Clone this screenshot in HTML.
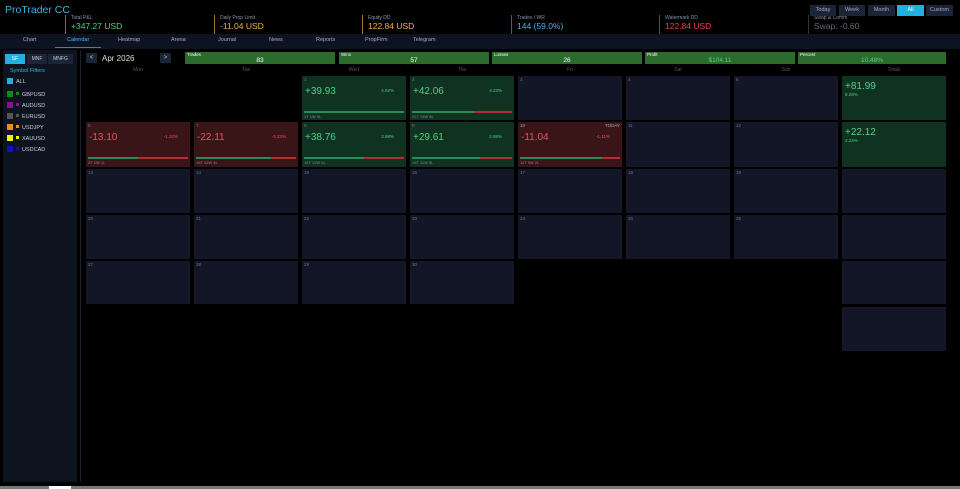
<!DOCTYPE html><html><head><meta charset="utf-8"><style>
*{margin:0;padding:0;box-sizing:border-box}
body{width:960px;height:489px;background:#000;font-family:"Liberation Sans",sans-serif;position:relative;overflow:hidden;color:#ccc}
.a{position:absolute}
.stat{position:absolute;top:15px;height:19px;border-left:1px solid;padding-left:5px}
.stat .l{font-size:5px;color:#8a93a8;line-height:6px}
.stat .v{font-size:8.5px;line-height:11px}
.btn{position:absolute;top:5px;height:11px;background:#1c2438;font-size:5.5px;color:#aab;text-align:center;line-height:11px}
.tab{position:absolute;top:37px;font-size:5.5px;color:#aab}
.cell{position:absolute;width:104px;background:#121626}
.cell .d{position:absolute;left:2px;top:1px;font-size:4.5px;color:#778}
.g{background:#0f3320}.r{background:#3a1518}
.big{position:absolute;left:3px;top:10px;font-size:10px}
.pct{position:absolute;right:12px;top:12px;font-size:4.5px}
.bar{position:absolute;left:2px;right:2px;top:35px;height:1.5px}
.ft{position:absolute;left:2px;top:38px;font-size:4px;color:#889}
.sum{position:absolute;top:52px;height:12px;width:150px;background:#2d6b2d}
.sum .t{position:absolute;left:2px;top:0;font-size:4.5px;color:#fff}
.sum .n{position:absolute;left:0;right:0;top:5px;text-align:center;font-size:6.5px;color:#fff}
.dh{position:absolute;top:67px;width:104px;text-align:center;font-size:5px;color:#555}
.sym{position:absolute;left:7px;font-size:5.5px;color:#ccd}
.sym i{display:inline-block;width:6px;height:6px;margin-right:3px;vertical-align:-1px}
.sym b{display:inline-block;width:3px;height:3px;margin-right:3px;vertical-align:1px}
</style></head><body>
<div class="a" style="left:5px;top:4px;font-size:10.5px;color:#3ab4e0">ProTrader CC</div>
<div class="stat" style="left:65px;border-color:#2c8a5c"><div class="l">Total P&amp;L</div><div class="v" style="color:#4fd18a">+347.27 USD</div></div>
<div class="stat" style="left:214px;border-color:#a07a3a"><div class="l">Daily Prop Limit</div><div class="v" style="color:#f0b24a">-11.04 USD</div></div>
<div class="stat" style="left:362px;border-color:#a07a3a"><div class="l">Equity DD</div><div class="v" style="color:#f0b24a">122.84 USD</div></div>
<div class="stat" style="left:511px;border-color:#2a6a8a"><div class="l">Trades / WR</div><div class="v" style="color:#4ab0e0">144 (59.0%)</div></div>
<div class="stat" style="left:659px;border-color:#9a2a30"><div class="l">Watermark DD</div><div class="v" style="color:#e84050">122.84 USD</div></div>
<div class="stat" style="left:808px;border-color:#333;width:145px"><div class="l">Swap &amp; Comm</div><div class="v" style="color:#667">Swap: -0.60</div></div>
<div class="btn" style="left:810px;width:26px">Today</div>
<div class="btn" style="left:839px;width:26px">Week</div>
<div class="btn" style="left:868px;width:27px">Month</div>
<div class="btn" style="left:897px;width:27px;background:#22b0e0;color:#fff">All</div>
<div class="btn" style="left:926px;width:27px">Custom</div>
<div class="a" style="left:0;top:34px;width:960px;height:15px;background:#0e1322"></div>
<div class="a" style="left:55px;top:47px;width:46px;height:1px;background:#2a8ab8"></div>
<div class="tab" style="left:23px">Chart</div>
<div class="tab" style="left:67px;color:#4ab8e8">Calendar</div>
<div class="tab" style="left:118px">Heatmap</div>
<div class="tab" style="left:171px">Arena</div>
<div class="tab" style="left:218px">Journal</div>
<div class="tab" style="left:269px">News</div>
<div class="tab" style="left:316px">Reports</div>
<div class="tab" style="left:365px">PropFirm</div>
<div class="tab" style="left:413px">Telegram</div>
<div class="a" style="left:3px;top:50px;width:74px;height:432px;background:#0e1320"></div>
<div class="a" style="left:80px;top:50px;width:1px;height:432px;background:#1a2030"></div>
<div class="a" style="left:5px;top:54px;width:20px;height:10px;background:#22b0e0;color:#fff;font-size:5px;text-align:center;line-height:10px">SF</div>
<div class="a" style="left:27px;top:54px;width:20px;height:10px;background:#1c2438;font-size:5px;text-align:center;line-height:10px">MNF</div>
<div class="a" style="left:48px;top:54px;width:25px;height:10px;background:#1c2438;font-size:5px;text-align:center;line-height:10px">MNFG</div>
<div class="a" style="left:10px;top:68px;font-size:5.5px;color:#3ab4e0">Symbol Filters</div>
<div class="sym" style="top:78px"><i style="background:#22b0e0"></i>ALL</div>
<div class="sym" style="top:91px"><i style="background:#128a12"></i><b style="background:#128a12"></b>GBPUSD</div>
<div class="sym" style="top:102px"><i style="background:#8a128a"></i><b style="background:#8a128a"></b>AUDUSD</div>
<div class="sym" style="top:113px"><i style="background:#555"></i><b style="background:#555"></b>EURUSD</div>
<div class="sym" style="top:124px"><i style="background:#f08a20"></i><b style="background:#f08a20"></b>USDJPY</div>
<div class="sym" style="top:135px"><i style="background:#f0f020"></i><b style="background:#f0f020"></b>XAUUSD</div>
<div class="sym" style="top:146px"><i style="background:#1010c0"></i><b style="background:#1010c0"></b>USDCAD</div>
<div class="a" style="left:86px;top:53px;width:11px;height:10px;background:#1c2438;font-size:6px;text-align:center;line-height:10px">&lt;</div>
<div class="a" style="left:102px;top:54px;font-size:8px;color:#ddd">Apr 2026</div>
<div class="a" style="left:160px;top:53px;width:11px;height:10px;background:#1c2438;font-size:6px;text-align:center;line-height:10px">&gt;</div>
<div class="sum" style="left:185px"><span class="t">Trades</span><span class="n">83</span></div>
<div class="sum" style="left:339px"><span class="t">Wins</span><span class="n">57</span></div>
<div class="sum" style="left:492px"><span class="t">Losses</span><span class="n">26</span></div>
<div class="sum" style="left:645px"><span class="t">Profit</span><span class="n" style="color:#4fd18a">$104.11</span></div>
<div class="sum" style="left:798px;width:148px"><span class="t">Percent</span><span class="n" style="color:#4fd18a">10.48%</span></div>
<div class="dh" style="left:86px">Mon</div><div class="dh" style="left:194px">Tue</div><div class="dh" style="left:302px">Wed</div><div class="dh" style="left:410px">Thu</div><div class="dh" style="left:518px">Fri</div><div class="dh" style="left:626px">Sat</div><div class="dh" style="left:734px">Sun</div><div class="dh" style="left:842px">Totals</div>
<div class="cell g" style="left:302px;top:76px;height:44px"><span class="d">1</span><span class="big" style="color:#4fd18a">+39.93</span><span class="pct" style="color:#4fd18a">4.02%</span><div class="bar" style="background:#2a8a5a"></div><span class="ft">1T 1W 0L</span></div>
<div class="cell g" style="left:410px;top:76px;height:44px"><span class="d">2</span><span class="big" style="color:#4fd18a">+42.06</span><span class="pct" style="color:#4fd18a">4.23%</span><div class="bar" style="background:linear-gradient(90deg,#2a8a5a 62%,#b03030 62%)"></div><span class="ft">21T 13W 8L</span></div>
<div class="cell" style="left:518px;top:76px;height:44px"><span class="d">3</span></div>
<div class="cell" style="left:626px;top:76px;height:44px"><span class="d">4</span></div>
<div class="cell" style="left:734px;top:76px;height:44px"><span class="d">5</span></div>
<div class="cell g" style="left:842px;top:76px;height:44px"><span class="big" style="top:5px;color:#4fd18a">+81.99</span><span class="a" style="left:3px;top:16px;font-size:4.5px;color:#4fd18a">8.28%</span></div>
<div class="cell r" style="left:86px;top:122px;height:45px"><span class="d">6</span><span class="big" style="color:#e85060">-13.10</span><span class="pct" style="color:#e85060">-1.32%</span><div class="bar" style="background:linear-gradient(90deg,#2a8a5a 50%,#b03030 50%)"></div><span class="ft">2T 1W 1L</span></div>
<div class="cell r" style="left:194px;top:122px;height:45px"><span class="d">7</span><span class="big" style="color:#e85060">-22.11</span><span class="pct" style="color:#e85060">-2.23%</span><div class="bar" style="background:linear-gradient(90deg,#2a8a5a 75%,#b03030 75%)"></div><span class="ft">16T 12W 4L</span></div>
<div class="cell g" style="left:302px;top:122px;height:45px"><span class="d">8</span><span class="big" style="color:#4fd18a">+38.76</span><span class="pct" style="color:#4fd18a">3.98%</span><div class="bar" style="background:linear-gradient(90deg,#2a8a5a 60%,#b03030 60%)"></div><span class="ft">18T 12W 6L</span></div>
<div class="cell g" style="left:410px;top:122px;height:45px"><span class="d">9</span><span class="big" style="color:#4fd18a">+29.61</span><span class="pct" style="color:#4fd18a">2.98%</span><div class="bar" style="background:linear-gradient(90deg,#2a8a5a 68%,#b03030 68%)"></div><span class="ft">16T 11W 5L</span></div>
<div class="cell r" style="left:518px;top:122px;height:45px"><span class="d" style="color:#aab">10</span><span class="a" style="right:2px;top:1px;font-size:4.5px;color:#aab">TODAY</span><span class="big" style="color:#e85060">-11.04</span><span class="pct" style="color:#e85060">-1.11%</span><div class="bar" style="background:linear-gradient(90deg,#2a8a5a 82%,#b03030 82%)"></div><span class="ft">11T 9W 2L</span></div>
<div class="cell" style="left:626px;top:122px;height:45px"><span class="d">11</span></div>
<div class="cell" style="left:734px;top:122px;height:45px"><span class="d">12</span></div>
<div class="cell g" style="left:842px;top:122px;height:45px"><span class="big" style="top:5px;color:#4fd18a">+22.12</span><span class="a" style="left:3px;top:16px;font-size:4.5px;color:#4fd18a">2.23%</span></div>
<div class="cell" style="left:86px;top:169px;height:44px"><span class="d">13</span></div>
<div class="cell" style="left:194px;top:169px;height:44px"><span class="d">14</span></div>
<div class="cell" style="left:302px;top:169px;height:44px"><span class="d">15</span></div>
<div class="cell" style="left:410px;top:169px;height:44px"><span class="d">16</span></div>
<div class="cell" style="left:518px;top:169px;height:44px"><span class="d">17</span></div>
<div class="cell" style="left:626px;top:169px;height:44px"><span class="d">18</span></div>
<div class="cell" style="left:734px;top:169px;height:44px"><span class="d">19</span></div>
<div class="cell" style="left:842px;top:169px;height:44px"></div>
<div class="cell" style="left:86px;top:215px;height:44px"><span class="d">20</span></div>
<div class="cell" style="left:194px;top:215px;height:44px"><span class="d">21</span></div>
<div class="cell" style="left:302px;top:215px;height:44px"><span class="d">22</span></div>
<div class="cell" style="left:410px;top:215px;height:44px"><span class="d">23</span></div>
<div class="cell" style="left:518px;top:215px;height:44px"><span class="d">24</span></div>
<div class="cell" style="left:626px;top:215px;height:44px"><span class="d">25</span></div>
<div class="cell" style="left:734px;top:215px;height:44px"><span class="d">26</span></div>
<div class="cell" style="left:842px;top:215px;height:44px"></div>
<div class="cell" style="left:86px;top:261px;height:43px"><span class="d">27</span></div>
<div class="cell" style="left:194px;top:261px;height:43px"><span class="d">28</span></div>
<div class="cell" style="left:302px;top:261px;height:43px"><span class="d">29</span></div>
<div class="cell" style="left:410px;top:261px;height:43px"><span class="d">30</span></div>
<div class="cell" style="left:842px;top:261px;height:43px"></div>
<div class="cell" style="left:842px;top:307px;height:44px"></div>
<div class="a" style="left:0;top:486px;width:960px;height:3px;background:#777"></div>
<div class="a" style="left:49px;top:486px;width:22px;height:3px;background:#fff"></div>
</body></html>
